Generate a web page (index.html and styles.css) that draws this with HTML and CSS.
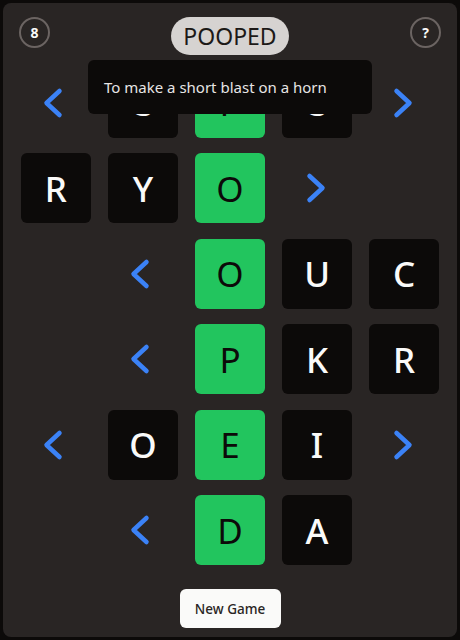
FILE: index.html
```html
<!DOCTYPE html>
<html lang="en">
<head>
<meta charset="utf-8">
<title>Word Game</title>
<link rel="stylesheet" href="styles.css">
</head>
<body>
<div class="app">
  <div class="panel">
    <header class="header">
      <div class="circle">8</div>
      <div class="title">POOPED</div>
      <div class="circle">?</div>
    </header>
    <div class="tooltip">To make a short blast on a horn</div>
    <div class="grid">
      <div class="cell"><svg class="chev" viewBox="0 0 24 32"><polyline points="17.5,4 4.5,16 17.5,28"/></svg></div>
      <div class="tile">O</div>
      <div class="tile green">P</div>
      <div class="tile">O</div>
      <div class="cell"><svg class="chev" viewBox="0 0 24 32"><polyline points="6.5,4 19.5,16 6.5,28"/></svg></div>

      <div class="tile">R</div>
      <div class="tile">Y</div>
      <div class="tile green">O</div>
      <div class="cell"><svg class="chev" viewBox="0 0 24 32"><polyline points="6.5,4 19.5,16 6.5,28"/></svg></div>
      <div class="cell"></div>

      <div class="cell"></div>
      <div class="cell"><svg class="chev" viewBox="0 0 24 32"><polyline points="17.5,4 4.5,16 17.5,28"/></svg></div>
      <div class="tile green">O</div>
      <div class="tile">U</div>
      <div class="tile">C</div>

      <div class="cell"></div>
      <div class="cell"><svg class="chev" viewBox="0 0 24 32"><polyline points="17.5,4 4.5,16 17.5,28"/></svg></div>
      <div class="tile green">P</div>
      <div class="tile">K</div>
      <div class="tile">R</div>

      <div class="cell"><svg class="chev" viewBox="0 0 24 32"><polyline points="17.5,4 4.5,16 17.5,28"/></svg></div>
      <div class="tile">O</div>
      <div class="tile green">E</div>
      <div class="tile">I</div>
      <div class="cell"><svg class="chev" viewBox="0 0 24 32"><polyline points="6.5,4 19.5,16 6.5,28"/></svg></div>

      <div class="cell"></div>
      <div class="cell"><svg class="chev" viewBox="0 0 24 32"><polyline points="17.5,4 4.5,16 17.5,28"/></svg></div>
      <div class="tile green">D</div>
      <div class="tile">A</div>
      <div class="cell"></div>
    </div>
    <div class="footer">
      <button class="btn">New Game</button>
    </div>
  </div>
</div>
</body>
</html>
```
FILE: styles.css
```css
* { box-sizing: border-box; }
html, body { margin: 0; padding: 0; }
body {
  background: #0c0a09;
  font-family: "Noto Sans", "Open Sans", sans-serif;
}
.app {
  width: 460px;
  height: 640px;
  padding: 3px;
}
.panel {
  position: relative;
  height: 634px;
  background: #292524;
  border-radius: 8px;
  padding: 14px 18px 0;
}
.header {
  display: flex;
  justify-content: space-between;
  align-items: flex-start;
  margin: 0 -2px;
}
.circle {
  width: 31px;
  height: 31px;
  border-radius: 50%;
  border: 2px solid #6b6462;
  color: #fafaf9;
  font-weight: 700;
  font-size: 14px;
  display: flex;
  align-items: center;
  justify-content: center;
  line-height: 1;
}
.title {
  height: 38px;
  padding: 0 12px;
  border-radius: 19px;
  background: #d6d3d1;
  color: #1c1917;
  font-size: 23px;
  line-height: 38px;
}
.tooltip {
  position: absolute;
  left: 85px;
  top: 57px;
  width: 284px;
  height: 54px;
  background: #0c0a09;
  border-radius: 6px;
  color: #e7e5e4;
  font-size: 15px;
  line-height: 54px;
  padding: 0 16px;
  z-index: 2;
}
.grid {
  margin-top: 12.5px;
  display: grid;
  grid-template-columns: repeat(5, 1fr);
  grid-auto-rows: 70px;
  column-gap: 17.3px;
  row-gap: 15.5px;
}
.cell {
  display: flex;
  align-items: center;
  justify-content: center;
}
.chev {
  width: 24px;
  height: 32px;
  margin-right: 4px;
  fill: none;
  stroke: #3b82f6;
  stroke-width: 4.5;
  stroke-linecap: round;
  stroke-linejoin: round;
}
.tile {
  background: #0c0a09;
  border-radius: 6px;
  color: #fafaf9;
  font-size: 35px;
  font-weight: 500;
  display: flex;
  align-items: center;
  justify-content: center;
}
.tile.green {
  background: #22c55e;
  color: #0c0a09;
  font-weight: 400;
}
.footer {
  display: flex;
  justify-content: center;
  margin-top: 24px;
}
.btn {
  width: 101px;
  height: 39px;
  border: none;
  border-radius: 6px;
  background: #fafaf9;
  color: #292524;
  font-family: "Noto Sans", "Open Sans", sans-serif;
  font-size: 13.5px;
  font-weight: 500;
  padding: 0;
}
```
